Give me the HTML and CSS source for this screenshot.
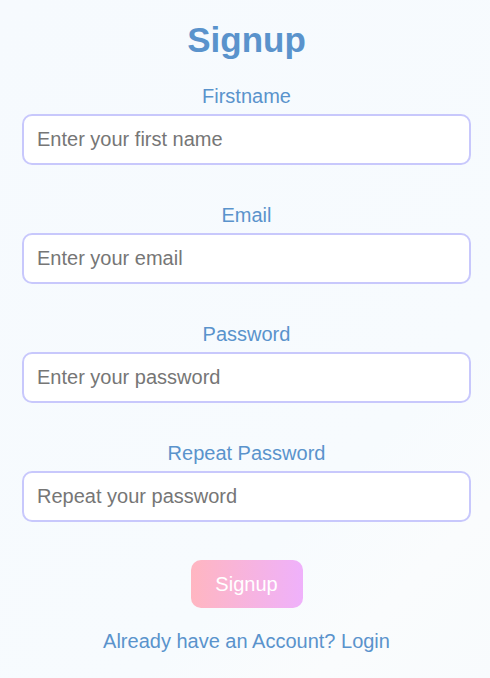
FILE: index.html
```html
<!DOCTYPE html>
<html lang="en">
<head>
<meta charset="utf-8">
<title>Signup</title>
<link rel="stylesheet" href="styles.css">
</head>
<body>
<main class="page">
  <form class="form">
    <h1 class="title">Signup</h1>
    <div class="field">
      <label class="label" for="fn">Firstname</label>
      <input class="input" id="fn" type="text" placeholder="Enter your first name">
    </div>
    <div class="field">
      <label class="label" for="em">Email</label>
      <input class="input" id="em" type="email" placeholder="Enter your email">
    </div>
    <div class="field">
      <label class="label" for="pw">Password</label>
      <input class="input" id="pw" type="password" placeholder="Enter your password">
    </div>
    <div class="field">
      <label class="label" for="rp">Repeat Password</label>
      <input class="input" id="rp" type="password" placeholder="Repeat your password">
    </div>
    <button class="btn" type="button">Signup</button>
    <p class="foot">Already have an Account? Login</p>
  </form>
</main>
</body>
</html>
```

FILE: styles.css
```css
html, body {
  margin: 0;
  padding: 0;
  height: 100%;
}
body {
  font-family: "Liberation Sans", Arial, sans-serif;
  background: linear-gradient(135deg, #f6fafe 0%, #f7fbfe 70%, #fafcfd 85%, #f8fbfd 100%);
}
.page {
  min-height: 678px;
  box-sizing: border-box;
  padding: 20px 19px 0 22px;
}
.form {
  display: flex;
  flex-direction: column;
  align-items: center;
}
.title {
  margin: 0;
  font-size: 35px;
  line-height: 39px;
  font-weight: 700;
  color: #5a93cc;
}
.field {
  width: 100%;
  display: flex;
  flex-direction: column;
  align-items: center;
  gap: 6px;
  margin-top: 26px;
}
.field + .field {
  margin-top: 39px;
}
.label {
  font-size: 20px;
  line-height: 23px;
  color: #5a93cc;
}
.input {
  width: 100%;
  height: 51px;
  box-sizing: border-box;
  border: 2px solid #c8c8fc;
  border-radius: 10px;
  background: #fff;
  padding: 0 13px;
  font-family: "Liberation Sans", Arial, sans-serif;
  font-size: 20px;
  color: #333;
  outline: none;
}
.input::placeholder {
  color: #767676;
}
.btn {
  margin-top: 38px;
  width: 112px;
  height: 48px;
  border: none;
  border-radius: 10px;
  background: linear-gradient(90deg, #ffb6c1 0%, #efb1fb 100%);
  color: #fff;
  font-family: "Liberation Sans", Arial, sans-serif;
  font-size: 20px;
}
.foot {
  margin: 22px 0 0 0;
  font-size: 20px;
  line-height: 23px;
  color: #5a93cc;
}
```
